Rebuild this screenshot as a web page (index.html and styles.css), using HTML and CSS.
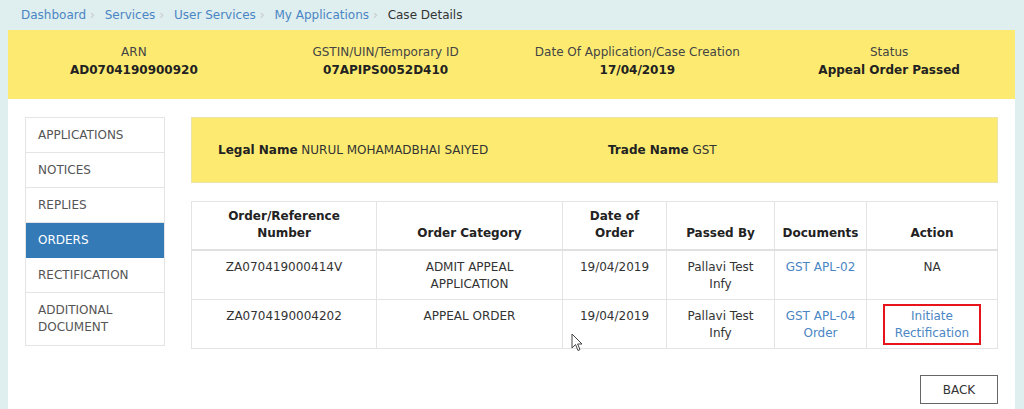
FILE: index.html
```html
<!DOCTYPE html>
<html>
<head>
  <title>Case Details</title>
  <link rel="stylesheet" href="styles.css">
</head>
<body>
  <div class="page">

    <div class="breadcrumb">
      <a href="#">Dashboard</a><span class="sep">&rsaquo;</span>
      <a href="#">Services</a><span class="sep">&rsaquo;</span>
      <a href="#">User Services</a><span class="sep">&rsaquo;</span>
      <a href="#">My Applications</a><span class="sep">&rsaquo;</span>
      <span class="current">Case Details</span>
    </div>

    <div class="case-header">
      <div class="case-item">
        <div class="case-label">ARN</div>
        <div class="case-value">AD0704190900920</div>
      </div>
      <div class="case-item">
        <div class="case-label">GSTIN/UIN/Temporary ID</div>
        <div class="case-value">07APIPS0052D410</div>
      </div>
      <div class="case-item">
        <div class="case-label">Date Of Application/Case Creation</div>
        <div class="case-value">17/04/2019</div>
      </div>
      <div class="case-item">
        <div class="case-label">Status</div>
        <div class="case-value">Appeal Order Passed</div>
      </div>
    </div>

    <div class="content">

      <ul class="side-nav">
        <li class="nav-item">APPLICATIONS</li>
        <li class="nav-item">NOTICES</li>
        <li class="nav-item">REPLIES</li>
        <li class="nav-item active">ORDERS</li>
        <li class="nav-item">RECTIFICATION</li>
        <li class="nav-item nav-item-tall">ADDITIONAL<br>DOCUMENT</li>
      </ul>

      <div class="main">

        <div class="name-box">
          <div><b>Legal Name</b> NURUL MOHAMADBHAI SAIYED</div>
          <div><b>Trade Name</b> GST</div>
        </div>

        <table class="orders">
          <thead>
            <tr>
              <th class="col-ref">Order/Reference<br>Number</th>
              <th class="col-cat">Order Category</th>
              <th class="col-date">Date of<br>Order</th>
              <th class="col-by">Passed By</th>
              <th class="col-doc">Documents</th>
              <th class="col-act">Action</th>
            </tr>
          </thead>
          <tbody>
            <tr>
              <td>ZA070419000414V</td>
              <td>ADMIT APPEAL<br>APPLICATION</td>
              <td>19/04/2019</td>
              <td>Pallavi Test<br>Infy</td>
              <td><a href="#">GST APL-02</a></td>
              <td>NA</td>
            </tr>
            <tr>
              <td>ZA0704190004202</td>
              <td>APPEAL ORDER</td>
              <td class="cursor-cell">19/04/2019
                <svg class="cursor" width="12" height="19" viewBox="0 0 12 19">
                  <path d="M1 1 L1 15 L4.5 11.5 L7 17.5 L9 16.6 L6.6 11 L11 11 Z" fill="#fff" stroke="#444" stroke-width="1"/>
                </svg>
              </td>
              <td>Pallavi Test<br>Infy</td>
              <td><a href="#">GST APL-04<br>Order</a></td>
              <td><a href="#" class="highlight">Initiate<br>Rectification</a></td>
            </tr>
          </tbody>
        </table>

        <div class="actions">
          <button class="back-button">BACK</button>
        </div>

      </div>
    </div>

  </div>
</body>
</html>
```

FILE: styles.css
```css
body
{
  margin:0;
  background-color:#dfeeef;
  font-family:"DejaVu Sans", Verdana, sans-serif;
  font-size:12px;
  color:#333;
}

.page
{
  margin:0 9px 0 8px;
}

.breadcrumb
{
  height:30px;
  line-height:30px;
  padding-left:13px;
}

.breadcrumb a
{
  color:#4a86c4;
  text-decoration:none;
}

.breadcrumb .sep
{
  color:#c3c9cc;
  margin:0 6px 0 4px;
}

.breadcrumb .current
{
  color:#333;
}

.case-header
{
  background-color:#fdeb71;
  height:69px;
  display:grid;
  grid-template-columns:repeat(4, 1fr);
  text-align:center;
  box-sizing:border-box;
  padding-top:13px;
  line-height:18px;
}

.case-label
{
  color:#444;
}

.case-value
{
  font-weight:bold;
  color:#222;
}

.content
{
  background-color:#fff;
  display:flex;
  align-items:flex-start;
  gap:26px;
  padding:18px 17px 20px 17px;
}

.side-nav
{
  list-style:none;
  margin:0;
  padding:0;
  width:140px;
  flex-shrink:0;
  border:1px solid #e4e4e4;
  box-sizing:border-box;
}

.nav-item
{
  height:35px;
  line-height:34px;
  padding:0 12px;
  color:#555;
  border-bottom:1px solid #e4e4e4;
  box-sizing:border-box;
}

.nav-item:last-child
{
  border-bottom:none;
}

.nav-item.active
{
  background-color:#337ab7;
  color:#fff;
  border-bottom-color:#337ab7;
}

.nav-item-tall
{
  height:52px;
  line-height:17px;
  padding-top:9px;
}

.main
{
  flex:1;
  min-width:0;
}

.name-box
{
  background-color:#fdeb71;
  border:1px solid #ece3a8;
  height:66px;
  box-sizing:border-box;
  display:grid;
  grid-template-columns:390px 1fr;
  align-items:center;
  padding:0 26px;
  color:#333;
}

.name-box b
{
  color:#222;
}

.orders
{
  width:100%;
  margin-top:18px;
  border-collapse:collapse;
  table-layout:fixed;
  text-align:center;
  line-height:17px;
}

.orders th, .orders td
{
  border:1px solid #e4e4e4;
  padding:8px 4px 6px 4px;
  box-sizing:border-box;
}

.orders th
{
  vertical-align:bottom;
  font-weight:bold;
  color:#222;
  border-bottom:2px solid #e0e0e0;
  padding-top:6px;
  padding-bottom:7px;
}

.orders td
{
  vertical-align:top;
}

.orders a
{
  color:#4a86c4;
  text-decoration:none;
}

.col-ref { width:185px; }
.col-cat { width:186px; }
.col-date { width:104px; }
.col-by { width:108px; }
.col-doc { width:92px; }

.highlight
{
  display:inline-block;
  vertical-align:top;
  border:2px solid #e8141c;
  padding:2px 10px 1px 10px;
  margin:-4px 0 -4px 0;
}

.cursor-cell
{
  position:relative;
}

.cursor
{
  position:absolute;
  left:8px;
  top:33px;
}

.actions
{
  display:flex;
  justify-content:flex-end;
  margin-top:26px;
}

.back-button
{
  width:78px;
  height:29px;
  background-color:#fff;
  border:1px solid #666;
  font-family:"DejaVu Sans", Verdana, sans-serif;
  font-size:12px;
  color:#333;
  cursor:pointer;
}
```
